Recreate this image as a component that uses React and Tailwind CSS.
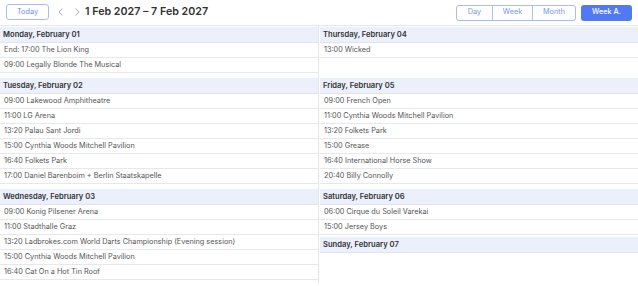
const cells = [
  [
    { day: "Monday, February 01", items: ["End: 17:00 The Lion King", "09:00 Legally Blonde The Musical"] },
  ],
  [
    { day: "Thursday, February 04", items: ["13:00 Wicked"] },
  ],
  [
    {
      day: "Tuesday, February 02",
      items: [
        "09:00 Lakewood Amphitheatre",
        "11:00 LG Arena",
        "13:20 Palau Sant Jordi",
        "15:00 Cynthia Woods Mitchell Pavilion",
        "16:40 Folkets Park",
        "17:00 Daniel Barenboim + Berlin Staatskapelle",
      ],
    },
  ],
  [
    {
      day: "Friday, February 05",
      items: [
        "09:00 French Open",
        "11:00 Cynthia Woods Mitchell Pavilion",
        "13:20 Folkets Park",
        "15:00 Grease",
        "16:40 International Horse Show",
        "20:40 Billy Connolly",
      ],
    },
  ],
  [
    {
      day: "Wednesday, February 03",
      items: [
        "09:00 Konig Pilsener Arena",
        "11:00 Stadthalle Graz",
        "13:20 Ladbrokes.com World Darts Championship (Evening session)",
        "15:00 Cynthia Woods Mitchell Pavilion",
        "16:40 Cat On a Hot Tin Roof",
      ],
    },
  ],
  [
    { day: "Saturday, February 06", items: ["06:00 Cirque du Soleil Varekai", "15:00 Jersey Boys"] },
    { day: "Sunday, February 07", items: [] },
  ],
];

function Chevron({ dir }) {
  return (
    <svg viewBox="0 0 6 10" className="h-[8px] w-[5px]" fill="none" stroke="#9ca3af" strokeWidth="1.2">
      <path d={dir === "left" ? "M5 1 L1 5 L5 9" : "M1 1 L5 5 L1 9"} strokeLinecap="round" strokeLinejoin="round" />
    </svg>
  );
}

function DayGroup({ day, items, last }) {
  return (
    <div className={last ? "pb-[2px]" : "pb-[4px]"}>
      <div className="flex h-[16px] items-center border-b border-[#dfe4ef] bg-[#ebf0fb] px-[3px] text-[7.6px] font-semibold text-[#333]">
        {day}
      </div>
      {items.map((t) => (
        <div key={t} className="flex h-[15px] items-center border-b border-[#e6e8ec] px-[4px] text-[7.3px] text-[#555]">
          {t}
        </div>
      ))}
    </div>
  );
}

export default function App() {
  return (
    <div className="h-[286px] w-[638px] overflow-hidden bg-white" style={{ fontFamily: "Inter, 'Liberation Sans', sans-serif" }}>
      <div className="flex h-[26px] items-center justify-between border-b border-[#e3e7ef] px-[6px]">
        <div className="flex items-center">
          <button className="h-[16px] w-[43px] rounded-[3px] border border-[#a9bdf4] text-[7.3px] text-[#6f8cee]">Today</button>
          <div className="ml-[9px] flex items-center gap-[12px]">
            <Chevron dir="left" />
            <Chevron dir="right" />
          </div>
          <span className="ml-[5px] text-[10.7px] font-semibold text-[#333]">1 Feb 2027 – 7 Feb 2027</span>
        </div>
        <div className="flex items-center">
          <div className="flex h-[16px] overflow-hidden rounded-[3px] border border-[#a9bdf4] text-[7.3px] text-[#7b95ee]">
            <button className="w-[36px] border-r border-[#a9bdf4]">Day</button>
            <button className="w-[40px] border-r border-[#a9bdf4]">Week</button>
            <button className="w-[42px]">Month</button>
          </div>
          <button className="ml-[5px] h-[16px] w-[51px] rounded-[3px] bg-[#5179f2] text-[7.3px] font-medium text-white">Week A.</button>
        </div>
      </div>
      <div className="grid grid-cols-2">
        {cells.map((groups, i) => (
          <div key={i} className={i % 2 === 0 ? "border-r border-[#e3e6ec] pt-[1px]" : "pl-[1px] pt-[1px]"}>
            {groups.map((g, j) => (
              <DayGroup key={g.day} {...g} last={groups.length > 1 && j === 0} />
            ))}
          </div>
        ))}
      </div>
    </div>
  );
}
